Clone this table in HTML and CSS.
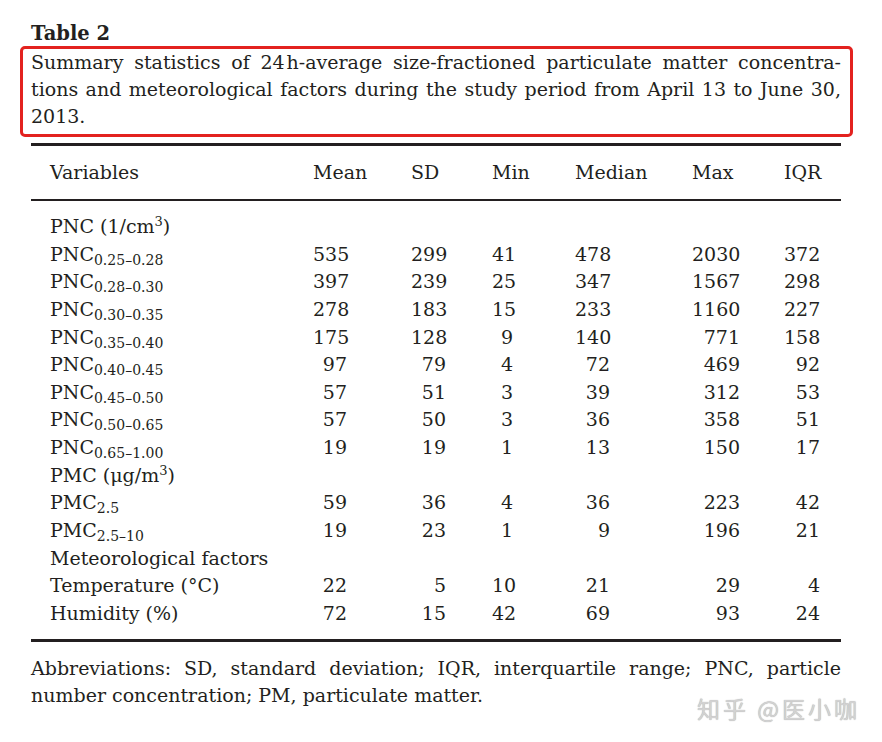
FILE: index.html
```html
<!DOCTYPE html>
<html lang="en">
<head>
<meta charset="utf-8">
<title>Table 2</title>
<link rel="stylesheet" href="styles.css">
</head>
<body>
<div class="page">
  <div class="title">Table 2</div>
  <div class="caption">
    <span class="line just">Summary statistics of 24&#8202;h-average size-fractioned particulate matter concentra-</span>
    <span class="line just">tions and meteorological factors during the study period from April 13 to June 30,</span>
    <span class="line">2013.</span>
  </div>
  <div class="table">
    <div class="row head">
      <span class="v">Variables</span><span>Mean</span><span>SD</span><span>Min</span><span>Median</span><span>Max</span><span>IQR</span>
    </div>
    <div class="body">
      <div class="row"><span class="v">PNC (1/cm<sup>3</sup>)</span></div>
      <div class="row"><span class="v">PNC<sub>0.25–0.28</sub></span><span>535</span><span>299</span><span>41</span><span>478</span><span>2030</span><span>372</span></div>
      <div class="row"><span class="v">PNC<sub>0.28–0.30</sub></span><span>397</span><span>239</span><span>25</span><span>347</span><span>1567</span><span>298</span></div>
      <div class="row"><span class="v">PNC<sub>0.30–0.35</sub></span><span>278</span><span>183</span><span>15</span><span>233</span><span>1160</span><span>227</span></div>
      <div class="row"><span class="v">PNC<sub>0.35–0.40</sub></span><span>175</span><span>128</span><span>9</span><span>140</span><span>771</span><span>158</span></div>
      <div class="row"><span class="v">PNC<sub>0.40–0.45</sub></span><span>97</span><span>79</span><span>4</span><span>72</span><span>469</span><span>92</span></div>
      <div class="row"><span class="v">PNC<sub>0.45–0.50</sub></span><span>57</span><span>51</span><span>3</span><span>39</span><span>312</span><span>53</span></div>
      <div class="row"><span class="v">PNC<sub>0.50–0.65</sub></span><span>57</span><span>50</span><span>3</span><span>36</span><span>358</span><span>51</span></div>
      <div class="row"><span class="v">PNC<sub>0.65–1.00</sub></span><span>19</span><span>19</span><span>1</span><span>13</span><span>150</span><span>17</span></div>
      <div class="row"><span class="v">PMC (μg/m<sup>3</sup>)</span></div>
      <div class="row"><span class="v">PMC<sub>2.5</sub></span><span>59</span><span>36</span><span>4</span><span>36</span><span>223</span><span>42</span></div>
      <div class="row"><span class="v">PMC<sub>2.5–10</sub></span><span>19</span><span>23</span><span>1</span><span>9</span><span>196</span><span>21</span></div>
      <div class="row"><span class="v">Meteorological factors</span></div>
      <div class="row"><span class="v">Temperature (°C)</span><span>22</span><span>5</span><span>10</span><span>21</span><span>29</span><span>4</span></div>
      <div class="row"><span class="v">Humidity (%)</span><span>72</span><span>15</span><span>42</span><span>69</span><span>93</span><span>24</span></div>
    </div>
  </div>
  <div class="foot">
    <span class="line just">Abbreviations: SD, standard deviation; IQR, interquartile range; PNC, particle</span>
    <span class="line">number concentration; PM, particulate matter.</span>
  </div>
  <div class="watermark">知乎 @医小咖</div>
</div>
</body>
</html>
```
FILE: styles.css
```css
html, body {
  margin: 0;
  padding: 0;
  background: #ffffff;
}
body {
  font-family: "DejaVu Serif", "Liberation Serif", serif;
  color: #231f20;
  font-size: 19px;
}
.page {
  position: relative;
  width: 882px;
  height: 742px;
  padding-left: 20px;
  box-sizing: border-box;
}
.title {
  font-weight: bold;
  font-size: 19.5px;
  line-height: 22px;
  padding-top: 23px;
  padding-left: 11px;
  margin-bottom: 1px;
}
.caption {
  width: 833px;
  box-sizing: border-box;
  border: 3px solid #e3221f;
  border-radius: 5px;
  padding: 0 9px 4px 8px;
  line-height: 27px;
}
.line {
  display: block;
  white-space: nowrap;
}
.line.just {
  white-space: normal;
  text-align: justify;
  text-align-last: justify;
}
.table {
  width: 810px;
  margin-left: 11px;
  margin-top: 6px;
  border-top: 3px solid #231f20;
  border-bottom: 3px solid #231f20;
}
.row {
  display: grid;
  grid-template-columns: 282px 98px 81px 83px 117px 92px 57px;
  line-height: 27.64px;
}
.row .v {
  padding-left: 19px;
  white-space: nowrap;
}
.row span:not(.v) {
  text-align: right;
}
.row span:nth-child(2) { padding-right: 64px; }
.row span:nth-child(3) { padding-right: 46px; }
.row span:nth-child(4) { padding-right: 62px; }
.row span:nth-child(5) { padding-right: 82px; }
.row span:nth-child(6) { padding-right: 44px; }
.row span:nth-child(7) { padding-right: 21px; }
.row.head {
  line-height: 27px;
  padding: 13px 0 13px;
  border-bottom: 2px solid #231f20;
}
.row.head span:not(.v) {
  text-align: left;
  padding-right: 0;
}
.body {
  padding: 12px 0 11px;
}
sub {
  font-size: 14px;
  line-height: 0;
  vertical-align: -4px;
}
sup {
  font-size: 13px;
  line-height: 0;
  vertical-align: 7px;
}
.foot {
  width: 810px;
  margin-left: 11px;
  padding-top: 13px;
  line-height: 27px;
}
.watermark {
  position: absolute;
  left: 697px;
  top: 691px;
  font-family: "Noto Sans CJK SC", sans-serif;
  font-size: 23px;
  color: #d2d2d2;
  letter-spacing: 3px;
  text-shadow: 0 0 1px #a0a0a0;
}
```
